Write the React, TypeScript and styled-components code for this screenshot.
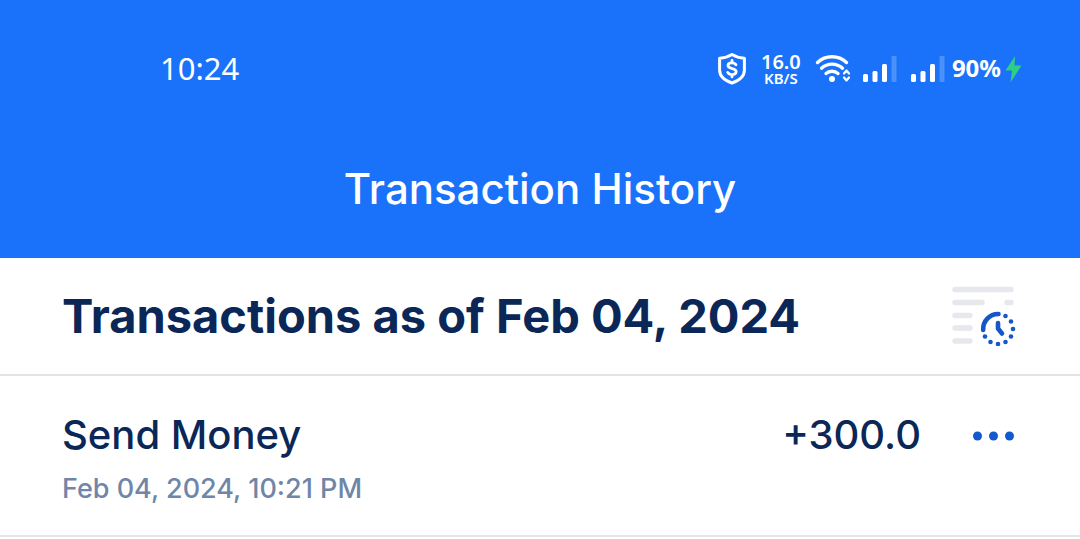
import React from 'react';
import styled, { createGlobalStyle } from 'styled-components';

const GlobalStyle = createGlobalStyle`
  *, *::before, *::after { box-sizing: border-box; }
  body { margin: 0; background: #fff; color: #0a2757; font-family: Inter, sans-serif; }
  h1, h2, h3, p, ul { margin: 0; padding: 0; }
`;

const Header = styled.header`
  background: #1972f9;
  color: #fff;
  padding: 48px 58px 44px 160px;
`;

const StatusBar = styled.div`
  display: flex;
  align-items: center;
  justify-content: space-between;
  height: 42px;
  font-family: 'Noto Sans', sans-serif;
`;

const Clock = styled.time`
  padding-bottom: 2px;
  font-size: 31px;
  line-height: 40px;
`;

const StatusIcons = styled.div`
  display: flex;
  align-items: center;
  svg { display: block; flex: none; }
`;

const NetSpeed = styled.div`
  display: flex;
  flex-direction: column;
  align-items: center;
  width: 40px;
  margin: 0 14px;
  font-weight: 600;
`;

const SpeedValue = styled.span`
  font-size: 20px;
  line-height: 18px;
`;

const SpeedUnit = styled.span`
  font-size: 15px;
  line-height: 15px;
`;

const Battery = styled.span`
  margin: 0 4px 0 7px;
  padding-bottom: 2px;
  font-size: 24px;
  line-height: 40px;
  font-weight: 700;
`;

const Signal = styled.svg<{ $gap: number }>`
  margin-left: ${(p) => p.$gap}px;
`;

const Title = styled.h1`
  margin: 74px 0 0 -102px;
  font-size: 42px;
  line-height: 50px;
  font-weight: 500;
  text-align: center;
`;

const Summary = styled.section`
  display: flex;
  align-items: center;
  justify-content: space-between;
  padding: 28px 64px 28px 62px;
  border-bottom: 2px solid #e2e3e5;
`;

const Heading = styled.h2`
  font-size: 47px;
  line-height: 60px;
  font-weight: 700;
`;

const IconButton = styled.button`
  display: flex;
  flex: none;
  padding: 0;
  border: 0;
  background: none;
  cursor: pointer;
`;

const List = styled.ul`
  list-style: none;
`;

const Row = styled.li`
  padding: 35px 64px 30px 62px;
  border-bottom: 2px solid #e4e5e7;
`;

const RowMain = styled.div`
  display: flex;
  align-items: center;
`;

const Name = styled.h3`
  flex: 1;
  font-size: 40px;
  line-height: 48px;
  font-weight: 500;
`;

const Amount = styled.span`
  margin-right: 52px;
  font-size: 40px;
  line-height: 48px;
  font-weight: 500;
`;

const Stamp = styled.p`
  margin-top: 14px;
  color: #6f86a8;
  font-size: 27px;
  line-height: 32px;
  font-weight: 500;
`;

const ShieldIcon = () => (
  <svg width="30" height="34" viewBox="0 0 30 34" fill="none" stroke="#fff" strokeLinecap="round" strokeLinejoin="round">
    <path d="M15 2.5C11 5 7 6 2.6 6.2V18c0 6.500 5 10.500 12.400 13 7.400-2.500 12.400-6.500 12.400-13V6.200C23 6 19 5 15 2.500Z" strokeWidth="3" />
    <path d="M19 12.800c-.8-1.400-2.200-2-4-2-2.400 0-4 1-4 2.800 0 4 8.200 2 8.200 6 0 1.900-1.700 3-4.200 3-2 0-3.500-.8-4.300-2.200M15 8.500v2.300M15 22.600v2.300" strokeWidth="2.800" />
  </svg>
);

const WifiIcon = () => (
  <svg width="36" height="30" viewBox="0 0 36 30" fill="none" stroke="#fff" strokeLinecap="round">
    <path d="M2.500 8.500C10.500.8 23.500.8 31.500 8.500" strokeWidth="3.400" />
    <path d="M6.500 14.200c6-5.500 15-5.500 21 0" strokeWidth="3.400" />
    <path d="M11 19.500c3.500-3 8.500-3 12 0" strokeWidth="3.400" />
    <circle cx="17" cy="25" r="3" fill="#fff" stroke="none" />
    <path d="M29 19.500 31.500 16.500l2.500 3M29 23.500l2.500 3 2.500-3" strokeWidth="2.200" strokeLinejoin="round" />
  </svg>
);

const SignalIcon = ({ gap }: { gap: number }) => (
  <Signal $gap={gap} width="34" height="28" viewBox="0 0 34 28" fill="#fff">
    <rect x="0" y="19" width="5" height="8" rx="1.500" />
    <rect x="9.500" y="16" width="5" height="11" rx="1.500" />
    <rect x="19" y="9" width="5" height="18" rx="1.500" />
    <rect x="28.500" y="1" width="5" height="26" rx="1" opacity=".22" />
  </Signal>
);

const BoltIcon = () => (
  <svg width="17" height="28" viewBox="0 0 17 28">
    <path d="M10 1 0.500 15.500H7L5.500 27.500 16.500 10.500H9.500Z" fill="#2fce86" />
  </svg>
);

const HistoryIcon = () => {
  const dots = [30, 60, 90, 120, 150, 180, 210, 240].map((deg) => {
    const a = (deg * Math.PI) / 180;
    return { x: 46 + 15 * Math.sin(a), y: 43 - 15 * Math.cos(a) };
  });
  return (
    <svg width="64" height="60" viewBox="0 0 64 60" fill="none" strokeLinecap="round">
      <path d="M3 3.500H59M3 16.500H30M55 16.500H59M3 29.500H18M3 42H18M3 55H18" stroke="#e6e8ed" strokeWidth="5.400" />
      <path d="M31.200 44A15 15 0 0 1 46.500 28" stroke="#1657c8" strokeWidth="4.600" />
      <path d="M46 37V42.500L50 47.500" stroke="#1657c8" strokeWidth="4.600" strokeLinejoin="round" />
      {dots.map((d) => (
        <circle key={`${d.x}-${d.y}`} cx={d.x} cy={d.y} r="2.300" fill="#1657c8" />
      ))}
    </svg>
  );
};

const MoreIcon = () => (
  <svg width="43" height="12" viewBox="0 0 43 12" fill="#1259cf">
    <circle cx="4.500" cy="7" r="4.500" />
    <circle cx="20.500" cy="7" r="4.500" />
    <circle cx="36.500" cy="7" r="4.500" />
  </svg>
);

const transactions = [{ name: 'Send Money', amount: '+300.0', stamp: 'Feb 04, 2024, 10:21 PM' }];

export default function App() {
  return (
    <>
      <GlobalStyle />
      <Header>
        <StatusBar>
          <Clock>10:24</Clock>
          <StatusIcons>
            <ShieldIcon />
            <NetSpeed>
              <SpeedValue>16.0</SpeedValue>
              <SpeedUnit>KB/S</SpeedUnit>
            </NetSpeed>
            <WifiIcon />
            <SignalIcon gap={12} />
            <SignalIcon gap={14} />
            <Battery>90%</Battery>
            <BoltIcon />
          </StatusIcons>
        </StatusBar>
        <Title>Transaction History</Title>
      </Header>
      <main>
        <Summary>
          <Heading>Transactions as of Feb 04, 2024</Heading>
          <IconButton type="button" aria-label="Choose period">
            <HistoryIcon />
          </IconButton>
        </Summary>
        <List>
          {transactions.map((t) => (
            <Row key={t.stamp}>
              <RowMain>
                <Name>{t.name}</Name>
                <Amount>{t.amount}</Amount>
                <IconButton type="button" aria-label="More options">
                  <MoreIcon />
                </IconButton>
              </RowMain>
              <Stamp>{t.stamp}</Stamp>
            </Row>
          ))}
        </List>
      </main>
    </>
  );
}
